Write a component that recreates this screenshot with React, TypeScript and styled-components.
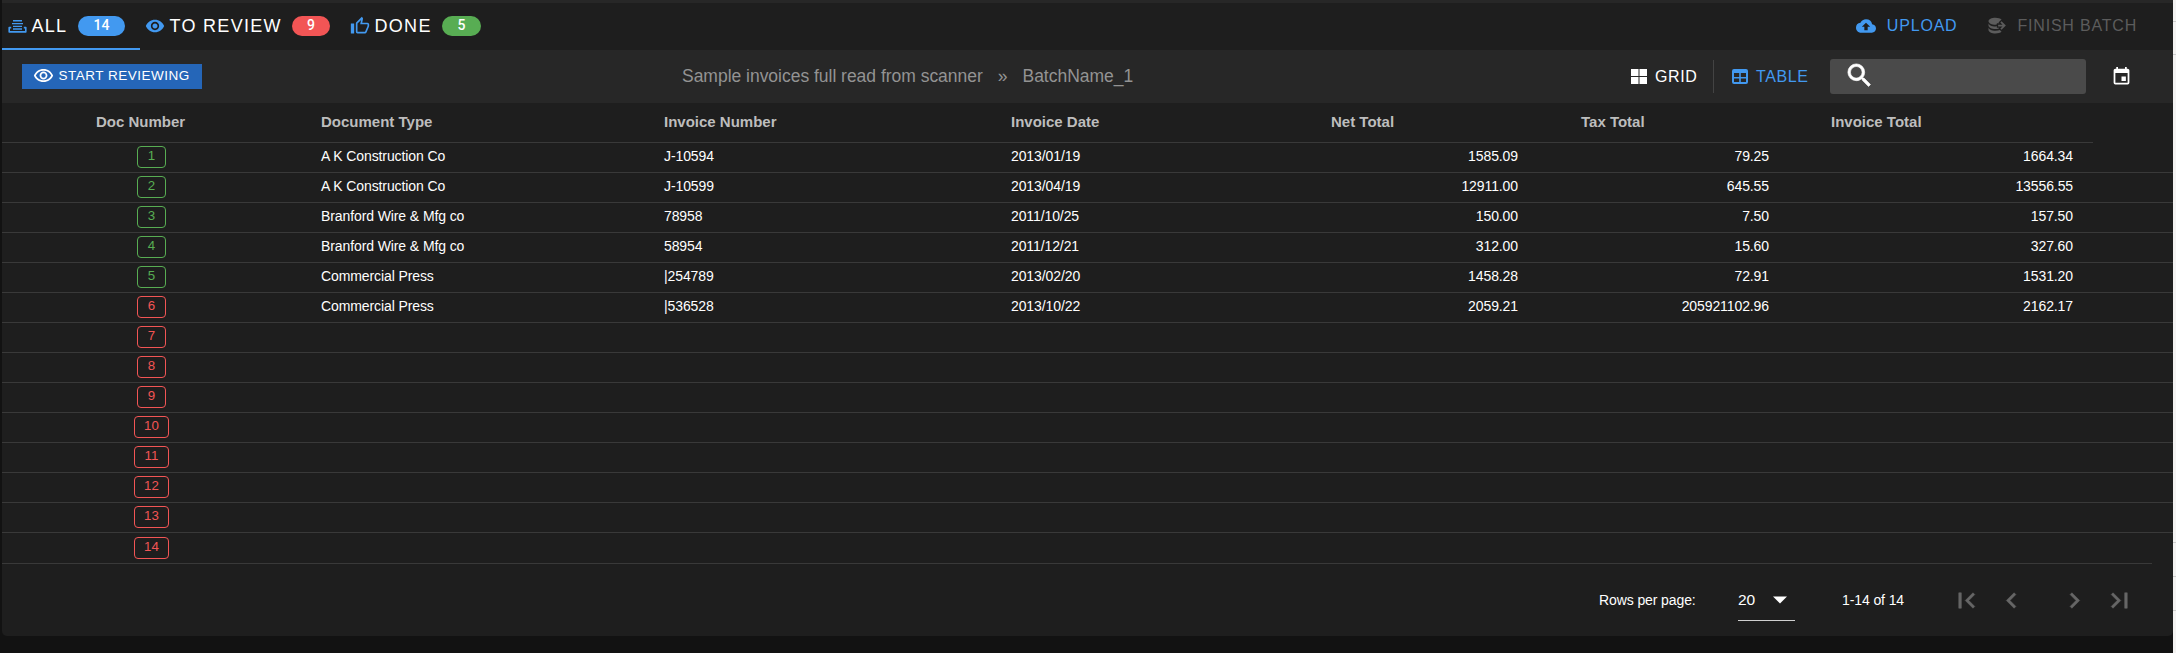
import React from "react";
import styled, { createGlobalStyle } from "styled-components";
import {
  MdRemoveRedEye, MdOutlineRemoveRedEye, MdCloudUpload, MdSearch,
  MdFirstPage, MdLastPage, MdChevronLeft, MdChevronRight,
} from "react-icons/md";

const BLUE = "#4299f0";
const RED = "#f25555";
const GREEN = "#58ad53";
const SANS = '"Liberation Sans", Arial, sans-serif';

const Global = createGlobalStyle`
  * { box-sizing: border-box; }
  body { margin: 0; background: #121212; font-family: ${SANS}; color: #fff; overflow: hidden; }
  svg { display: block; flex: none; }
`;
const Page = styled.div`
  width: 2176px;
  height: 653px;
  padding-left: 2px;
  display: flex;
  background: #121212;
`;
const Panel = styled.main`
  width: 2171px;
  height: 636px;
  background: #1e1e1e;
  border-top: 3px solid #272727;
  border-radius: 0 0 5px 5px;
  display: flex;
  flex-direction: column;
`;
const Edge = styled.aside`
  width: 3px;
  height: 653px;
  background: linear-gradient(
    #f4f3f2 0 21px, #cfcfcf 21px 22px, #f4f3f2 22px 54px, #cfcfcf 54px 55px,
    #f4f3f2 55px 542px, #cfcfcf 542px 543px, #f4f3f2 543px 576px, #cfcfcf 576px 577px,
    #f4f3f2 577px 610px, #cfcfcf 610px 611px, #f4f3f2 611px
  );
`;

const TabBar = styled.nav`
  height: 47px;
  display: flex;
  justify-content: space-between;
  flex: none;
`;
const Tabs = styled.div`display: flex;`;
const Tab = styled.div<{ $w: number; $active?: boolean }>`
  width: ${p => p.$w}px;
  height: 47px;
  padding-left: 5px;
  padding-top: 1px;
  border-bottom: 2px solid ${p => (p.$active ? BLUE : "transparent")};
  display: flex;
  align-items: center;
  white-space: nowrap;
`;
const TabIcon = styled.span`
  width: 24.5px;
  display: flex;
  color: ${BLUE};
`;
const TabLabel = styled.span<{ $w: number }>`
  font-size: 18px;
  letter-spacing: 1.3px;
  width: ${p => p.$w}px;
`;
const Pill = styled.span<{ $w: number; $bg: string }>`
  width: ${p => p.$w}px;
  height: 20px;
  border-radius: 10px;
  background: ${p => p.$bg};
  font: 500 14px/19px Roboto, sans-serif;
  text-align: center;
`;
const Actions = styled.div`
  display: flex;
  align-items: center;
  padding: 0 36px 2px 0;
  gap: 28px;
`;
const Action = styled.div<{ $off?: boolean }>`
  display: flex;
  align-items: center;
  gap: 11px;
  font-size: 16px;
  letter-spacing: 0.8px;
  color: ${p => (p.$off ? "#5c5c5c" : BLUE)};
`;

const ToolBar = styled.header`
  height: 53px;
  flex: none;
  background: #272727;
  display: grid;
  grid-template-columns: 680px 1fr auto;
  padding-right: 41px;
`;
const Start = styled.button`
  margin: 14px 0 0 20px;
  width: 180px;
  height: 25px;
  border: 0;
  padding: 0 0 3px 11px;
  background: #2566b8;
  color: #fff;
  display: flex;
  align-items: center;
  gap: 4.5px;
  font: 13.5px ${SANS};
  letter-spacing: 0.5px;
  white-space: nowrap;
`;
const Crumbs = styled.div`
  display: flex;
  gap: 15px;
  align-items: center;
  font-size: 17.5px;
  letter-spacing: -0.02px;
  color: #939393;
  padding-bottom: 1px;
`;
const ViewTools = styled.div`display: flex; align-items: center;`;
const View = styled.div<{ $on?: boolean; $w: number }>`
  width: ${p => p.$w}px;
  display: flex;
  align-items: center;
  gap: 8px;
  font-size: 16px;
  letter-spacing: 0.6px;
  color: ${p => (p.$on ? BLUE : "#fff")};
`;
const Divider = styled.i`
  width: 1px;
  height: 33px;
  background: #434343;
  margin-right: 18px;
`;
const Search = styled.div`
  width: 256px;
  height: 35px;
  background: #4a4a4a;
  border-radius: 3px;
  padding: 1px 0 0 14px;
  margin-right: 25px;
  path:not([fill="none"]) { stroke: #fff; stroke-width: 0.5px; }
`;

const Grid = styled.div`
  display: grid;
  grid-template-columns: 319px 343px 347px 320px 250px 250px 262px;
`;
const HeadRow = styled(Grid)`
  width: 2091px;
  height: 40px;
  border-bottom: 1px solid #393939;
  align-items: center;
  font-size: 15px;
  font-weight: bold;
  color: #bdbdbd;
  padding-bottom: 2px;
  flex: none;
`;
const HeadCell = styled.span<{ $indent?: number }>`padding-left: ${p => p.$indent ?? 0}px;`;
const Row = styled(Grid)<{ $last: boolean }>`
  width: ${p => (p.$last ? 2150 : 2171)}px;
  height: ${p => (p.$last ? 31 : 30)}px;
  padding-top: ${p => (p.$last ? 4 : 3)}px;
  border-bottom: 1px solid #393939;
  flex: none;
`;
const Cell = styled.span`
  font-size: 14px;
  line-height: 20px;
  letter-spacing: -0.1px;
  white-space: nowrap;
`;
const NumCell = styled(Cell)<{ $pad: number }>`
  text-align: right;
  padding-right: ${p => p.$pad}px;
`;
const DocCell = styled.span`
  width: 299px;
  display: flex;
  justify-content: center;
`;
const DocBadge = styled.span<{ $done: boolean; $wide: boolean }>`
  width: ${p => (p.$wide ? 35 : 29)}px;
  height: 22px;
  border: 1px solid;
  border-radius: 4px;
  color: ${p => (p.$done ? GREEN : RED)};
  font-size: 13.3px;
  line-height: 18px;
  text-align: center;
`;

const Footer = styled.footer`
  flex: 1;
  display: flex;
  justify-content: flex-end;
  align-items: center;
  padding: 0 38px 0 0;
  font-size: 14px;
  letter-spacing: -0.1px;
  white-space: nowrap;
`;
const RowsLabel = styled.span`width: 139px;`;
const PageSize = styled.span`
  width: 57px;
  height: 42px;
  margin: 15px 47px 0 0;
  border-bottom: 1px solid #d0d0d0;
  display: flex;
  align-items: center;
  gap: 18px;
  font-size: 15.5px;
  align-self: flex-start;
`;
const Range = styled.span`width: 109px;`;
const Pager = styled.span<{ $gap: number }>`
  width: 31px;
  color: #666;
  margin-right: ${p => p.$gap}px;
  path:not([fill="none"]) { stroke: #666; stroke-width: 0.4px; }
`;

const TrayIcon = () => (
  <svg width="20" height="13" viewBox="-1 0 20 13" fill="none" stroke="currentColor">
    <path d="M5 0.8H14M4 3.6H15M5 6.4H14M5 9H14" strokeWidth="1.4" />
    <path d="M3.2 7.6H1.2V11.9H17.8V7.6H15.8" strokeWidth="1.6" strokeLinejoin="round" />
  </svg>
);
const ThumbIcon = () => (
  <svg width="20" height="20" viewBox="0 0 24 24" fill="currentColor">
    <path d="M5,9V21H1V9H5M9,21A2,2 0 0,1 7,19V9C7,8.45 7.22,7.95 7.59,7.59L14.17,1L15.23,2.06C15.5,2.33 15.67,2.7 15.67,3.11L15.64,3.43L14.69,8H21C22.11,8 23,8.9 23,10V12C23,12.26 22.95,12.5 22.86,12.73L19.84,19.78C19.54,20.5 18.83,21 18,21H9M9,19H18.03L21,12V10H12.21L13.34,4.68L9,9.03V19Z" />
  </svg>
);
const DatabaseExportIcon = () => (
  <svg width="21" height="21" viewBox="0 0 24 24" fill="currentColor">
    <path d="M12,3C7.58,3 4,4.79 4,7C4,9.21 7.58,11 12,11C12.5,11 13,10.97 13.5,10.92V9.5H16.39L15.39,8.5L18.9,5C17.5,3.8 14.94,3 12,3M18.92,7.08L17.5,8.5L20,11H15V13H20L17.5,15.5L18.92,16.92L23.84,12M4,9V12C4,14.21 7.58,16 12,16C13.17,16 14.26,15.85 15.25,15.63L16.38,14.5H13.5V12.92C13,12.97 12.5,13 12,13C7.58,13 4,11.21 4,9M4,14V17C4,19.21 7.58,21 12,21C14.94,21 17.5,20.2 18.9,19L17,17.1C15.61,17.66 13.9,18 12,18C7.58,18 4,16.21 4,14Z" />
  </svg>
);
const GridIcon = () => (
  <svg width="16" height="15" viewBox="0 0 16 15" fill="currentColor">
    <path d="M0 0h7.5v7H0zM8.5 0H16v7H8.5zM0 8h7.5v7H0zM8.5 8H16v7H8.5z" />
  </svg>
);
const TableIcon = () => (
  <svg width="16" height="15" viewBox="0 0 16 15" fill="none" stroke="currentColor">
    <rect x="1" y="1" width="14" height="13" rx="1" strokeWidth="2" />
    <path d="M1 2.5H15" strokeWidth="3" />
    <path d="M8 3V14M1 8.7H15" strokeWidth="1.6" />
  </svg>
);
const CalendarIcon = () => (
  <svg width="21" height="21" viewBox="0 0 24 24" fill="currentColor">
    <path d="M19,19H5V8H19M16,1V3H8V1H6V3H5C3.89,3 3,3.89 3,5V19A2,2 0 0,0 5,21H19A2,2 0 0,0 21,19V5C21,3.89 20.1,3 19,3H18V1M17,12H12V17H17V12Z" />
  </svg>
);
const Caret = () => (
  <svg width="14" height="8" viewBox="0 0 14 8" fill="currentColor"><path d="M0 0.5H14L7 7.5Z" /></svg>
);

const invoices = [
  ["A K Construction Co", "J-10594", "2013/01/19", "1585.09", "79.25", "1664.34"],
  ["A K Construction Co", "J-10599", "2013/04/19", "12911.00", "645.55", "13556.55"],
  ["Branford Wire & Mfg co", "78958", "2011/10/25", "150.00", "7.50", "157.50"],
  ["Branford Wire & Mfg co", "58954", "2011/12/21", "312.00", "15.60", "327.60"],
  ["Commercial Press", "|254789", "2013/02/20", "1458.28", "72.91", "1531.20"],
  ["Commercial Press", "|536528", "2013/10/22", "2059.21", "205921102.96", "2162.17"],
];
const TOTAL = 14;
const DONE = 5;

export default function App() {
  return (
    <>
      <Global />
      <Page>
        <Panel>
          <TabBar>
            <Tabs>
              <Tab $w={138} $active>
                <TabIcon><TrayIcon /></TabIcon><TabLabel $w={46.5}>ALL</TabLabel><Pill $w={47} $bg={BLUE}>14</Pill>
              </Tab>
              <Tab $w={205}>
                <TabIcon><MdRemoveRedEye size={20} /></TabIcon><TabLabel $w={122.5}>TO REVIEW</TabLabel><Pill $w={38} $bg={RED}>9</Pill>
              </Tab>
              <Tab $w={140}>
                <TabIcon><ThumbIcon /></TabIcon><TabLabel $w={67.5}>DONE</TabLabel><Pill $w={39} $bg={GREEN}>5</Pill>
              </Tab>
            </Tabs>
            <Actions>
              <Action><MdCloudUpload size={20} />UPLOAD</Action>
              <Action $off><DatabaseExportIcon />FINISH BATCH</Action>
            </Actions>
          </TabBar>
          <ToolBar>
            <Start><MdOutlineRemoveRedEye size={21} />START REVIEWING</Start>
            <Crumbs><span>Sample invoices full read from scanner</span><span>»</span><span>BatchName_1</span></Crumbs>
            <ViewTools>
              <View $w={82}><GridIcon />GRID</View>
              <Divider />
              <View $on $w={98}><TableIcon />TABLE</View>
              <Search><MdSearch size={31} /></Search>
              <CalendarIcon />
            </ViewTools>
          </ToolBar>
          <HeadRow>
            <HeadCell $indent={94}>Doc Number</HeadCell>
            <HeadCell>Document Type</HeadCell>
            <HeadCell>Invoice Number</HeadCell>
            <HeadCell>Invoice Date</HeadCell>
            <HeadCell>Net Total</HeadCell>
            <HeadCell>Tax Total</HeadCell>
            <HeadCell>Invoice Total</HeadCell>
          </HeadRow>
          {Array.from({ length: TOTAL }, (_, i) => {
            const r = invoices[i];
            return (
              <Row key={i} $last={i === TOTAL - 1}>
                <DocCell><DocBadge $done={i < DONE} $wide={i >= 9}>{i + 1}</DocBadge></DocCell>
                {r && (
                  <>
                    <Cell>{r[0]}</Cell>
                    <Cell>{r[1]}</Cell>
                    <Cell>{r[2]}</Cell>
                    <NumCell $pad={63}>{r[3]}</NumCell>
                    <NumCell $pad={62}>{r[4]}</NumCell>
                    <NumCell $pad={20}>{r[5]}</NumCell>
                  </>
                )}
              </Row>
            );
          })}
          <Footer>
            <RowsLabel>Rows per page:</RowsLabel>
            <PageSize>20<Caret /></PageSize>
            <Range>1-14 of 14</Range>
            <Pager $gap={14}><MdFirstPage size={31} /></Pager>
            <Pager $gap={32}><MdChevronLeft size={31} /></Pager>
            <Pager $gap={14}><MdChevronRight size={31} /></Pager>
            <Pager $gap={0}><MdLastPage size={31} /></Pager>
          </Footer>
        </Panel>
        <Edge />
      </Page>
    </>
  );
}
